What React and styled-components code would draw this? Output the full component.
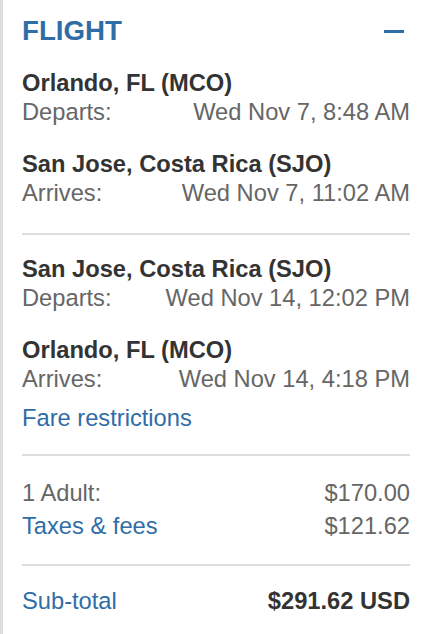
import React from "react";
import styled, { createGlobalStyle } from "styled-components";

const Global = createGlobalStyle`
  html, body { margin: 0; padding: 0; background: #fff; }
  body { font-family: "Liberation Sans", Arial, Helvetica, sans-serif; }
`;

const Panel = styled.section`
  box-sizing: border-box;
  width: 430px;
  min-height: 634px;
  border-left: 3px solid #dddddd;
  padding: 14px 20px 0 19px;
  font-size: 23.7px;
  line-height: 29px;
  color: #666;
`;

const Header = styled.div`
  display: flex;
  align-items: center;
  justify-content: space-between;
  height: 34px;
  margin-bottom: 21px;
`;

const Title = styled.h2`
  margin: 0;
  font-size: 27.7px;
  line-height: 34px;
  font-weight: 700;
  color: #2f6da6;
`;

const Minus = styled.span`
  display: block;
  width: 20px;
  height: 3px;
  background: #2f6da6;
  margin-right: 6px;
  margin-top: 0;
`;

const Stop = styled.div`
  & + & { margin-top: 23px; }
`;

const City = styled.div`
  font-weight: 700;
  color: #333;
`;

const Row = styled.div`
  display: flex;
  justify-content: space-between;
  margin-top: ${(p) => p.$top || 0}px;
  color: ${(p) => (p.$strong ? "#333" : "#666")};
  font-weight: ${(p) => (p.$strong ? 700 : 400)};
`;

const Link = styled.a`
  color: #2f6da6;
  font-weight: 400;
  text-decoration: none;
  cursor: pointer;
`;

const Divider = styled.hr`
  border: 0;
  height: 2px;
  background: #dddddd;
  margin: ${(p) => p.$m || "25px 0 20px"};
`;

const stopsOut = [
  { city: "Orlando, FL (MCO)", label: "Departs:", time: "Wed Nov 7, 8:48 AM" },
  { city: "San Jose, Costa Rica (SJO)", label: "Arrives:", time: "Wed Nov 7, 11:02 AM" },
];
const stopsBack = [
  { city: "San Jose, Costa Rica (SJO)", label: "Departs:", time: "Wed Nov 14, 12:02 PM" },
  { city: "Orlando, FL (MCO)", label: "Arrives:", time: "Wed Nov 14, 4:18 PM" },
];

function Stops({ items }) {
  return items.map((s, i) => (
    <Stop key={i}>
      <City>{s.city}</City>
      <Row>
        <span>{s.label}</span>
        <span>{s.time}</span>
      </Row>
    </Stop>
  ));
}

export default function App() {
  return (
    <>
      <Global />
      <Panel>
        <Header>
          <Title>FLIGHT</Title>
          <Minus aria-label="collapse" />
        </Header>
        <Stops items={stopsOut} />
        <Divider />
        <Stops items={stopsBack} />
        <Row $top={10}>
          <Link>Fare restrictions</Link>
        </Row>
        <Divider $m="21px 0 23px" />
        <Row>
          <span>1 Adult:</span>
          <span>$170.00</span>
        </Row>
        <Row $top={4}>
          <Link>Taxes &amp; fees</Link>
          <span>$121.62</span>
        </Row>
        <Divider $m="23px 0 21px" />
        <Row $strong>
          <Link>Sub-total</Link>
          <span>$291.62 USD</span>
        </Row>
      </Panel>
    </>
  );
}
